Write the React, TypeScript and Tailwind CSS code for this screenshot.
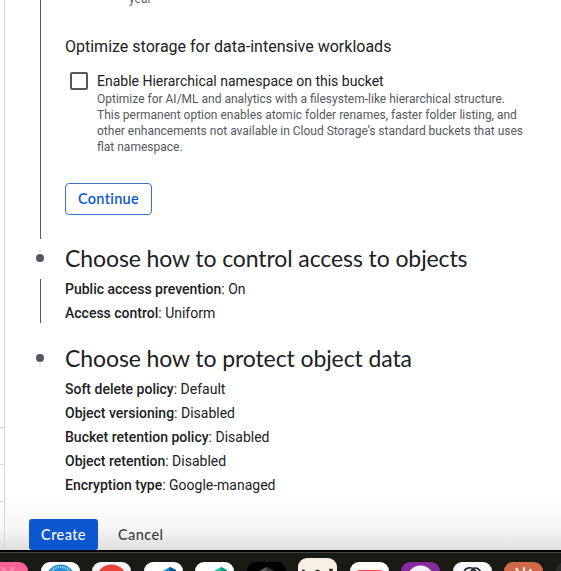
import React from "react";

function Fact({ label, value }: { label: string; value: string }) {
  return (
    <p className="h-6 text-[14px] leading-6 whitespace-nowrap">
      <span className="font-medium">{label}</span>: {value}
    </p>
  );
}

function StepTitle({ children }: { children: React.ReactNode }) {
  return (
    <div className="flex h-10 shrink-0 items-center">
      <span className="mb-[2px] ml-[31px] size-[8px] shrink-0 rounded-full bg-[#55595e]" />
      <h2 className="ml-[21px] pb-[2px] font-['Lato',sans-serif] text-[23px] leading-8 tracking-[-0.1px] whitespace-nowrap">
        {children}
      </h2>
    </div>
  );
}

function DockIcon({ className, children }: { className: string; children?: React.ReactNode }) {
  return (
    <div className={`h-[40px] w-[39px] shrink-0 overflow-hidden rounded-[9px] ${className}`}>
      <svg viewBox="0 0 39 40" className="h-[40px] w-[39px]">{children}</svg>
    </div>
  );
}

function Dock() {
  return (
    <div className="h-[21px] overflow-hidden border-t-2 border-black bg-[#191a14]">
      <div className="h-px bg-[#42433f]" />
      <div className="-ml-[11px] flex w-[640px] gap-[12.5px] pt-[8.5px]">
        <DockIcon className="bg-[#fb6296]">
          <path d="M13 5l4 5M25 5l-4 5" stroke="#ff8fb4" strokeWidth="2.5" />
        </DockIcon>
        <DockIcon className="bg-white">
          <circle cx="19.5" cy="17" r="14.5" fill="#2390dc" />
          <circle cx="19.5" cy="17" r="12" fill="none" stroke="#d7efff" strokeWidth="2.2" strokeDasharray="0.7 1.1" />
        </DockIcon>
        <DockIcon className="bg-[#f4f4f4]">
          <circle cx="19.5" cy="18" r="15.5" fill="#e8443a" />
        </DockIcon>
        <DockIcon className="bg-white">
          <path d="M19 9l7-4 6 3v6H19z" fill="#1588e0" />
          <path d="M26 5l6 3v6l-7-5z" fill="#07589c" />
        </DockIcon>
        <DockIcon className="bg-white">
          <path d="M19 9l7-4 6 3v6H19z" fill="#27c2a0" />
          <path d="M26 5v9h6V8z" fill="#12967d" />
        </DockIcon>
        <DockIcon className="bg-black">
          <path d="M12 9l7.5-4 7.5 4v8H12z" fill="#55575a" />
          <path d="M19.5 5v12H27V9z" fill="#303234" />
        </DockIcon>
        <DockIcon className="-mt-[3.5px] bg-[#f6efe2]">
          <path d="M4 12.500h2v2M17 14q2.500-3 5 0M32 14v-2.500h2v3" fill="none" stroke="#27231e" strokeWidth="1.5" />
        </DockIcon>
        <DockIcon className="bg-white">
          <path d="M7.5 8h24v10h-24z" fill="#fb4b3c" />
        </DockIcon>
        <DockIcon className="bg-[#862a9f]">
          <circle cx="19.5" cy="17" r="13.5" fill="#f7f3fa" />
        </DockIcon>
        <DockIcon className="bg-[#f7f8fa]">
          <path d="M11 13c-1-9 10-9 12-3M18 12c-1-9 11-7 10 1M15 12l6-4 8 5" fill="none" stroke="#252a31" strokeWidth="1.6" />
        </DockIcon>
        <DockIcon className="bg-[#cf6947]">
          <path d="M12 6l5 8M20 5v9M27 7l-4 7" stroke="#fbeae2" strokeWidth="2.2" />
        </DockIcon>
        <DockIcon className="bg-[#2b2b2c]" />
      </div>
    </div>
  );
}

export default function App() {
  return (
    <div className="h-[571px] w-[561px] overflow-hidden bg-white font-['Roboto',sans-serif] text-[#202124]">
      <div className="flex h-[550px] overflow-hidden bg-linear-to-b from-white from-[90%] via-[#f6f6f6] via-[96%] to-[#dfdfdf]">
        <aside className="flex w-[5px] shrink-0 flex-col border-r border-[#d5d6df] pt-[427px]">
          <div className="h-[37px] border-t border-[#d5d6df]" />
          <div className="h-[37px] border-t border-[#d5d6df]" />
          <div className="h-[37px] border-t border-[#d5d6df]" />
        </aside>
        <main className="flex flex-1 flex-col">
          <section className="ml-[35px] h-[239px] shrink-0 border-l border-[#55595e] pl-6">
            <p className="-mt-[9px] ml-16 h-4 text-[12px] leading-4 text-[#5f6368]">year</p>
            <h3 className="mt-7 h-6 text-[16px] leading-6 whitespace-nowrap">
              Optimize storage for data-intensive workloads
            </h3>
            <div className="mt-3 flex">
              <span className="mt-[1px] ml-[5px] size-[18px] shrink-0 rounded-[2px] border-2 border-[#55595e]" />
              <div className="ml-[9px]">
                <p className="h-5 text-[14px] leading-5 whitespace-nowrap">
                  Enable Hierarchical namespace on this bucket
                </p>
                <p className="text-[12px] leading-4 whitespace-nowrap text-[#55595e]">
                  Optimize for AI/ML and analytics with a filesystem-like hierarchical structure.<br />
                  This permanent option enables atomic folder renames, faster folder listing, and<br />
                  other enhancements not available in Cloud Storage’s standard buckets that uses<br />
                  flat namespace.
                </p>
              </div>
            </div>
            <button className="mt-7 flex h-8 w-[87px] items-center justify-center rounded-[4px] border border-[#3c70c8] pb-px font-['Lato',sans-serif] text-[14.5px] font-semibold tracking-[0.3px] text-[#0b57d0]">
              Continue
            </button>
          </section>
          <StepTitle>Choose how to control access to objects</StepTitle>
          <section className="ml-[35px] h-[44px] shrink-0 border-l border-[#55595e] pl-6">
            <div className="-mt-[2px]">
              <Fact label="Public access prevention" value="On" />
              <Fact label="Access control" value="Uniform" />
            </div>
          </section>
          <div className="mt-4 shrink-0">
            <StepTitle>Choose how to protect object data</StepTitle>
          </div>
          <section className="-mt-[2px] ml-[60px] shrink-0">
            <Fact label="Soft delete policy" value="Default" />
            <Fact label="Object versioning" value="Disabled" />
            <Fact label="Bucket retention policy" value="Disabled" />
            <Fact label="Object retention" value="Disabled" />
            <Fact label="Encryption type" value="Google-managed" />
          </section>
          <div className="mt-[22px] ml-6 flex shrink-0 font-['Lato',sans-serif] text-[14.5px] font-medium tracking-[0.4px]">
            <button className="flex h-[31px] w-[69px] items-center justify-center rounded-[3px] bg-[#0b57d0] text-white">Create</button>
            <button className="ml-5 flex h-[31px] items-center text-[#3c4043]">Cancel</button>
          </div>
        </main>
      </div>
      <Dock />
    </div>
  );
}
